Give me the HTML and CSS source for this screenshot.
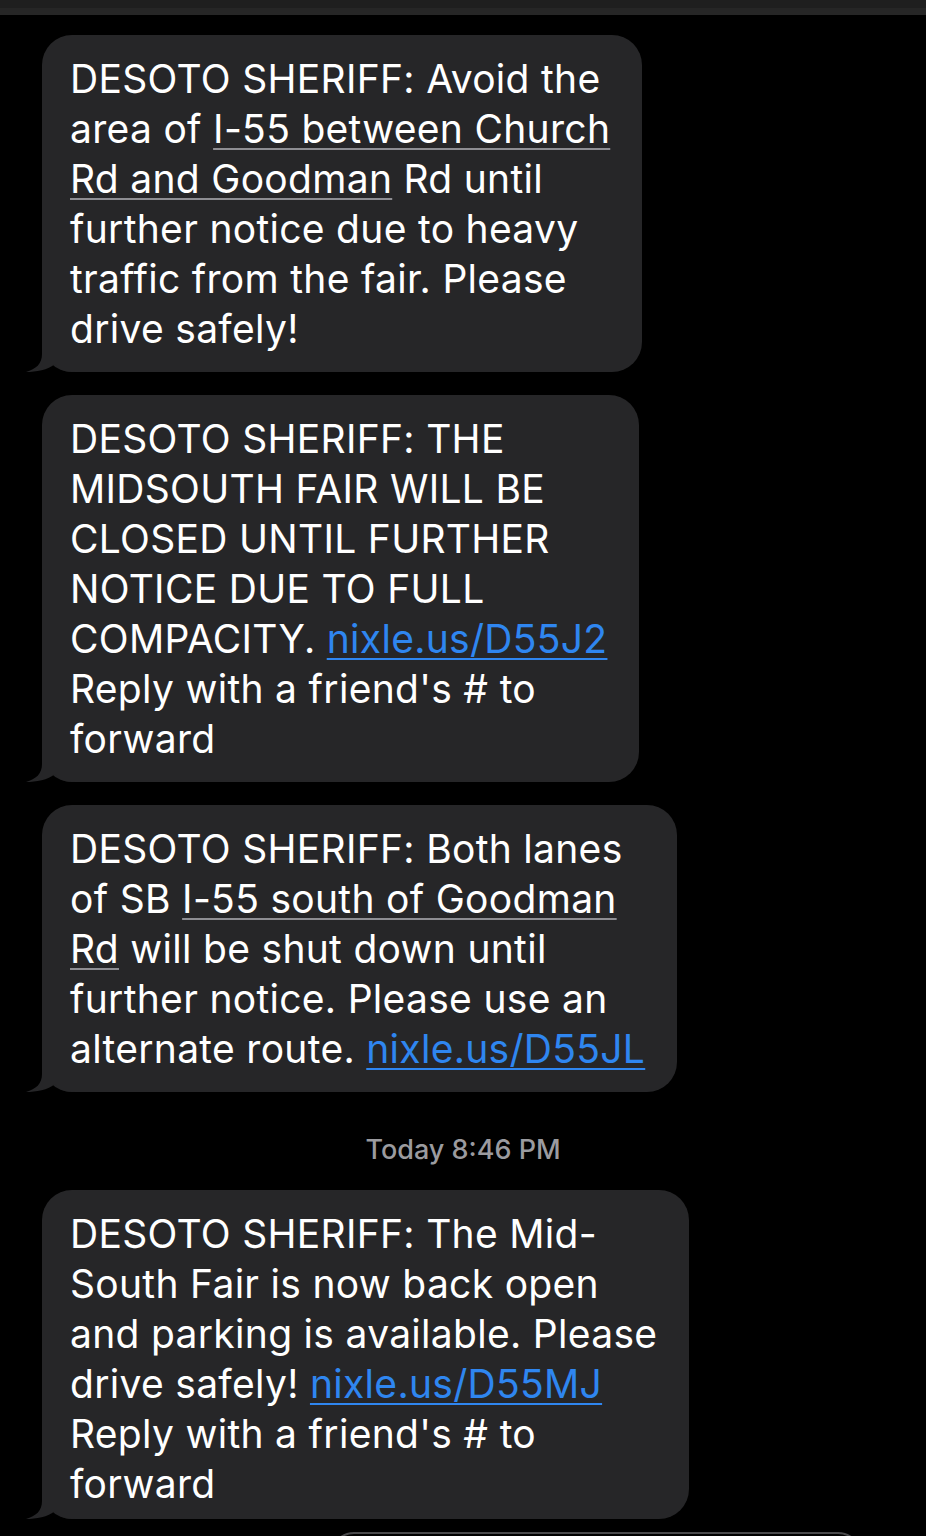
FILE: index.html
```html
<!DOCTYPE html>
<html lang="en">
<head>
<meta charset="utf-8">
<title>Messages</title>
<link rel="stylesheet" href="styles.css">
</head>
<body>
<div class="topbar"></div>
<main class="thread">
  <div class="bubble">
    <p class="text">DESOTO SHERIFF: Avoid the<br>area of <span class="detect">I-55 between Church<br>Rd and Goodman</span> Rd until<br>further notice due to heavy<br>traffic from the fair. Please<br>drive safely!</p>
    <svg class="tail" width="50" height="30" viewBox="0 0 50 30"><path d="M16,0 L50,0 L50,30 C38,30 32,27 29,22 C22,28 10,30 0,30 C10,27 16,22 16,12 Z"/></svg>
  </div>
  <div class="bubble">
    <p class="text">DESOTO SHERIFF: THE<br>MIDSOUTH FAIR WILL BE<br>CLOSED UNTIL FURTHER<br>NOTICE DUE TO FULL<br>COMPACITY. <a class="link" href="#">nixle.us/D55J2</a><br>Reply with a friend's # to<br>forward</p>
    <svg class="tail" width="50" height="30" viewBox="0 0 50 30"><path d="M16,0 L50,0 L50,30 C38,30 32,27 29,22 C22,28 10,30 0,30 C10,27 16,22 16,12 Z"/></svg>
  </div>
  <div class="bubble">
    <p class="text">DESOTO SHERIFF: Both lanes<br>of SB <span class="detect">I-55 south of Goodman<br>Rd</span> will be shut down until<br>further notice. Please use an<br>alternate route. <a class="link" href="#">nixle.us/D55JL</a></p>
    <svg class="tail" width="50" height="30" viewBox="0 0 50 30"><path d="M16,0 L50,0 L50,30 C38,30 32,27 29,22 C22,28 10,30 0,30 C10,27 16,22 16,12 Z"/></svg>
  </div>
  <div class="timestamp">Today 8:46 PM</div>
  <div class="bubble bubble-last">
    <p class="text">DESOTO SHERIFF: The Mid-<br>South Fair is now back open<br>and parking is available. Please<br>drive safely! <a class="link" href="#">nixle.us/D55MJ</a><br>Reply with a friend's # to<br>forward</p>
    <svg class="tail" width="50" height="30" viewBox="0 0 50 30"><path d="M16,0 L50,0 L50,30 C38,30 32,27 29,22 C22,28 10,30 0,30 C10,27 16,22 16,12 Z"/></svg>
  </div>
  <div class="compose"></div>
</main>
</body>
</html>
```
FILE: styles.css
```css
html, body {
  margin: 0;
  padding: 0;
  background: #000;
}
body {
  font-family: Inter, "Noto Sans", "Liberation Sans", sans-serif;
  color: #fff;
  overflow: hidden;
  height: 1536px;
}
.topbar {
  height: 8px;
  background: #1f1f1f;
  border-bottom: 7px solid #262626;
}
.thread {
  display: flex;
  flex-direction: column;
  align-items: flex-start;
  padding: 20px 0 0 42px;
}
.bubble {
  position: relative;
  background: #262628;
  border-radius: 30px;
  padding: 19px 32px 18px 28px;
  margin-bottom: 23px;
}
.bubble-last {
  padding-bottom: 10px;
}
.text {
  margin: 0;
  font-size: 39px;
  line-height: 50px;
  letter-spacing: 0.3px;
  white-space: nowrap;
  position: relative;
  z-index: 1;
}
.tail {
  position: absolute;
  left: -16px;
  bottom: 0;
  fill: #262628;
}
.detect {
  text-decoration: underline;
  text-decoration-color: #8e8e93;
  text-decoration-thickness: 2px;
  text-underline-offset: 5px;
}
.link {
  color: #2f86f0;
  text-decoration: underline;
  text-decoration-thickness: 2px;
  text-underline-offset: 5px;
}
.timestamp {
  align-self: stretch;
  margin: 19px 0 24px -42px;
  text-align: center;
  font-size: 27px;
  line-height: 32px;
  font-weight: 500;
  color: #9b9b9f;
}
.compose {
  margin: -10px 0 0 288px;
  width: 528px;
  height: 44px;
  border: 2px solid #4a4a4c;
  border-radius: 24px;
}
```
